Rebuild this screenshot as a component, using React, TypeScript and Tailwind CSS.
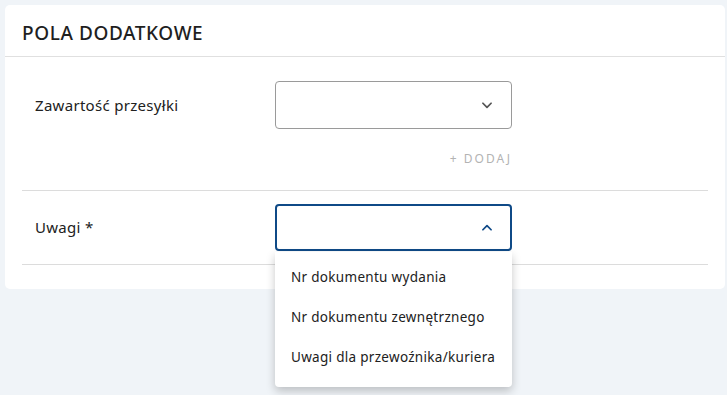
import React from "react";

const Chevron = ({ up, color }: { up?: boolean; color: string }) => (
  <svg width="14" height="14" viewBox="0 0 24 24" fill="none" stroke={color} strokeWidth="3" strokeLinecap="round" strokeLinejoin="round">
    {up ? <path d="M5 15l7-7 7 7" /> : <path d="M5 9l7 7 7-7" />}
  </svg>
);

export default function App() {
  return (
    <div className="min-h-[395px] w-[727px] bg-[#f0f4f8] p-[5px] pr-[2px] text-[#212121]" style={{ fontFamily: '"Noto Sans", "Open Sans", sans-serif' }}>
      <div className="relative w-[720px] rounded-[5px] bg-white">
        <div className="flex h-[52px] items-center border-b border-[#e0e0e0] px-[17px] pt-[6px]">
          <h2 className="text-[19px] font-medium tracking-[0.6px] text-[#1f1f1f]">POLA DODATKOWE</h2>
        </div>
        <div className="px-[17px] pb-[24px]">
          <div className="border-b border-[#dcdcdc] pt-[24px] pb-[22px]">
            <div className="flex items-center">
              <div className="w-[253px] pl-[13px] text-[15px] tracking-[0.3px]">Zawartość przesyłki</div>
              <div className="flex h-[48px] w-[237px] items-center justify-end rounded-[4px] border border-[#9a9a9a] pr-[17px]">
                <Chevron color="#555" />
              </div>
            </div>
            <div className="flex w-[490px] justify-end pt-[21px]">
              <span className="text-[12px] tracking-[2px] text-[#b3b3b3]">+ DODAJ</span>
            </div>
          </div>
          <div className="border-b border-[#dcdcdc] py-[13px]">
            <div className="flex items-center">
              <div className="w-[253px] pl-[13px] text-[15px] tracking-[0.3px]">Uwagi *</div>
              <div className="relative h-[47px] w-[237px]">
                <div className="flex h-full w-full items-center justify-end rounded-[4px] border-2 border-[#0f4a87] pr-[16px]">
                  <Chevron up color="#0f4a87" />
                </div>
                <div className="absolute left-0 top-[48px] z-10 w-[237px] rounded-b-[4px] bg-white pt-[5px] pb-[10px] shadow-[0_4px_10px_rgba(0,0,0,0.22)]">
                  <div className="flex h-[40px] items-center whitespace-nowrap px-[16px] text-[13.5px] tracking-[0.3px]">Nr dokumentu wydania</div>
                  <div className="flex h-[40px] items-center whitespace-nowrap px-[16px] text-[13.5px] tracking-[0.3px]">Nr dokumentu zewnętrznego</div>
                  <div className="flex h-[40px] items-center whitespace-nowrap px-[16px] text-[13.5px] tracking-[0.3px]">Uwagi dla przewoźnika/kuriera</div>
                </div>
              </div>
            </div>
          </div>
        </div>
      </div>
    </div>
  );
}
